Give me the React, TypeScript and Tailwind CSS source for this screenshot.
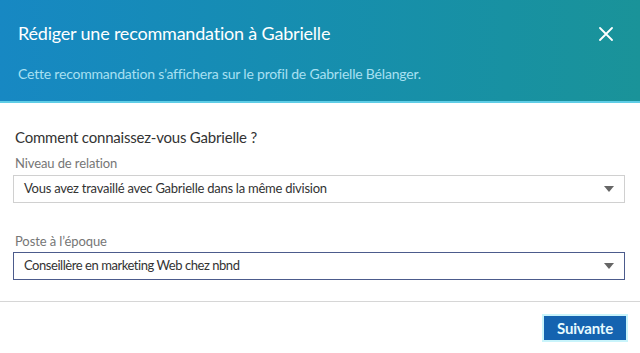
import React from "react";

const font = { fontFamily: "Lato, 'Open Sans', sans-serif" };

function Caret() {
  return (
    <svg width="10" height="6" viewBox="0 0 10 6" className="shrink-0">
      <path d="M0 0 L10 0 L5 6 Z" fill="#666" />
    </svg>
  );
}

export default function App() {
  return (
    <div className="w-[640px] h-[353px] bg-white overflow-hidden" style={font}>
      <div className="h-[103px] bg-gradient-to-r from-[#1788c3] to-[#1a9399] border-b-2 border-[#5fcde6] flex flex-col px-[18px] relative">
        <div className="mt-[22px] text-[18px] leading-[22px] text-white tracking-[-0.2px]">
          Rédiger une recommandation à Gabrielle
        </div>
        <div className="mt-[21px] text-[14px] leading-[18px] text-[#a8e0f2] tracking-[-0.2px]">
          Cette recommandation s’affichera sur le profil de Gabrielle Bélanger.
        </div>
        <button className="absolute right-[27px] top-[27px] w-[14px] h-[14px]">
          <svg width="14" height="14" viewBox="0 0 14 14">
            <path d="M1 1 L13 13 M13 1 L1 13" stroke="white" strokeWidth="1.8" strokeLinecap="round" />
          </svg>
        </button>
      </div>
      <div className="px-[13px]">
        <div className="mt-[24px] px-[2px] text-[15px] leading-[20px] text-[#333] tracking-[-0.2px]">
          Comment connaissez-vous Gabrielle ?
        </div>
        <div className="mt-[7px] px-[2px] text-[13px] leading-[18px] text-[#767676] tracking-[-0.1px]">
          Niveau de relation
        </div>
        <div className="mt-[3px] h-[28px] w-[612px] border border-[#d0d0d0] flex items-center justify-between pl-[10px] pr-[10px] text-[13px] text-[#333] tracking-[-0.25px]">
          <span>Vous avez travaillé avec Gabrielle dans la même division</span>
          <Caret />
        </div>
        <div className="mt-[29px] px-[2px] text-[13px] leading-[18px] text-[#767676] tracking-[-0.1px]">
          Poste à l’époque
        </div>
        <div className="mt-[2px] h-[28px] w-[612px] border border-[#4c5b8c] flex items-center justify-between pl-[10px] pr-[10px] text-[13px] text-[#333] tracking-[-0.45px]">
          <span>Conseillère en marketing Web chez nbnd</span>
          <Caret />
        </div>
      </div>
      <div className="mt-[21px] border-t border-[#d6d6d6]" />
      <div className="flex justify-end pr-[14px] pt-[14px]">
        <button className="h-[24px] w-[82px] bg-[#1463b0] text-[#e6fbff] text-[15px] font-bold leading-[24px] shadow-[0_0_0_2px_#c9f4fb] tracking-[-0.2px]">
          Suivante
        </button>
      </div>
    </div>
  );
}
